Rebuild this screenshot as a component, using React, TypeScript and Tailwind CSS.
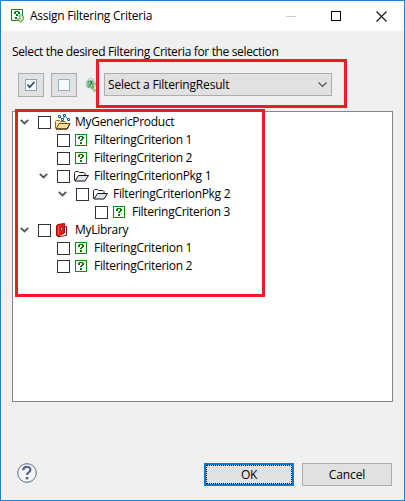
import React from "react";

function CriterionIcon() {
  return (
    <svg width="12" height="12" viewBox="0 0 12 12" shapeRendering="crispEdges" className="block">
      <rect x=".5" y=".5" width="11" height="11" fill="#fff" stroke="#128a12" />
      <path d="M4 2h4v1H4zM3 3h2v2H3zM7 3h2v2H7zM6 5h2v1H6zM5 6h2v1H5zM5 8h2v2H5z" fill="#087808" />
    </svg>
  );
}

function FilterIcon({ cloudy = false }: { cloudy?: boolean }) {
  return (
    <svg width="14" height="15" viewBox="0 0 14 15" className="block">
      {cloudy ? (
        <>
          <path d="M4 1Q7-1 9 2Q12 4 10 8Q8 11 5 10Q1 10 1 6Q0 3 4 1Z" fill="#e9f3f5" stroke="#a4c5c9" />
          <path d="M3 3h5v6H3z" fill="#b7d9bd" stroke="#49925a" />
          <path d="M4.5 4h2v2H5v2" fill="none" stroke="#176b26" />
        </>
      ) : (
        <>
          <path d="M.5.5h11v11H.5z" fill="#fff" stroke="#138013" />
          <path d="M4 2h4v1H4zM3 3h2v2H3zM7 3h2v2H7zM5 5h2v2H5zM4 8h2v2H4z" fill="#087808" />
        </>
      )}
      <path d="M8 6.5 9.5 5l1 1.5 2 .5v3.5l-1.5.5-.5 2-1.5.5-1-2-2-1 1.5-1 1 .5.5-2-1-.5z" fill="#b8d9a4" stroke="#70a964" strokeWidth=".9" />
      <path d="m9 8 2 1-1 2" fill="none" stroke="#e6f3cf" />
    </svg>
  );
}

function FolderIcon() {
  return (
    <svg width="15" height="11" viewBox="0 0 15 11" className="block">
      <path d="M.5 9.5v-8l1-1h3l1 1h4.5l1 1v2" fill="#fff" stroke="#222" />
      <path d="m1 10 3.5-5.5h10L11 10z" fill="#dce3f1" stroke="#111" />
    </svg>
  );
}

function ProductIcon() {
  return (
    <svg width="16" height="16" viewBox="0 0 16 16" className="block">
      <path d="M.5 14.5V7.5l1-1h3l1 1H10l1 1v1" fill="#fff0ba" stroke="#9b6710" />
      <path d="m1 15 3-5.5h11L12 15z" fill="#f9d999" stroke="#6d4810" />
      <path d="M1 15h11l3-5" fill="none" stroke="#39240a" />
      <g fill="#fff" stroke="#176399">
        <path d="M3.5 1.5h2v2h-2zM8.5.5h2v2h-2zM6.5 4.5h2v2h-2zM12.5 4.5h2v2h-2z" />
      </g>
      <path d="m5.5 3.5 1 1m2 0 1-2m1 0 2 2" stroke="#246b9b" />
    </svg>
  );
}

function LibraryIcon() {
  return (
    <svg width="12" height="15" viewBox="0 0 12 15" className="block">
      <path d="M8.5 3.5h2v9l-7.5 1" fill="#fff" stroke="#970808" />
      <path d="M.5 2.5 2 1.5 8.5.5V10L3 12.5v1.5L.5 12.5z" fill="#e51c1c" stroke="#a40707" />
      <path d="M2.5 3v9" stroke="#ff5a50" />
      <path d="m4.2 6 1-1.5 1.3.3v1.7L5 7.5z" fill="#fff" stroke="#850909" strokeWidth=".8" />
    </svg>
  );
}

function Chevron() {
  return (
    <svg width="9" height="6" viewBox="0 0 9 6" className="block">
      <path d="m.8.8 3.7 3.7L8.2.8" fill="none" stroke="#555" strokeWidth="1.8" />
    </svg>
  );
}

type Row = { label: string; level: number; kind: "product" | "criterion" | "folder" | "library" };

const rows: Row[] = [
  { label: "MyGenericProduct", level: 0, kind: "product" },
  { label: "FilteringCriterion 1", level: 1, kind: "criterion" },
  { label: "FilteringCriterion 2", level: 1, kind: "criterion" },
  { label: "FilteringCriterionPkg 1", level: 1, kind: "folder" },
  { label: "FilteringCriterionPkg 2", level: 2, kind: "folder" },
  { label: "FilteringCriterion 3", level: 3, kind: "criterion" },
  { label: "MyLibrary", level: 0, kind: "library" },
  { label: "FilteringCriterion 1", level: 1, kind: "criterion" },
  { label: "FilteringCriterion 2", level: 1, kind: "criterion" },
];

const indents = ["pl-[7px]", "pl-[26px]", "pl-[45px]", "pl-[64px]"];

function TreeRow({ row }: { row: Row }) {
  return (
    <div className={`flex h-[18px] items-center ${indents[row.level]}`}>
      <div className="w-[18px]">{row.kind !== "criterion" && <Chevron />}</div>
      <div className="size-[13px] border border-[#333] bg-white" />
      <div className={`flex w-6 shrink-0 ${row.kind === "criterion" || row.kind === "library" ? "pl-[5px]" : "pl-1"}`}>
        {row.kind === "criterion" && <CriterionIcon />}
        {row.kind === "folder" && <FolderIcon />}
        {row.kind === "product" && <ProductIcon />}
        {row.kind === "library" && <LibraryIcon />}
      </div>
      <span className="whitespace-nowrap tracking-[-0.3px]">{row.label}</span>
    </div>
  );
}

export default function App() {
  return (
    <main className="relative flex h-[501px] w-[405px] flex-col overflow-hidden border border-[#1a82d7] bg-[#f0f0f0] font-['Open_Sans','Noto_Sans',sans-serif] text-[12px] leading-[16px] text-black">
      <header className="flex h-[30px] shrink-0 items-center bg-white pl-[10px] pr-[17px]">
        <div className="mt-[1px] w-[19px]"><FilterIcon /></div>
        <h1 className="flex-1 whitespace-nowrap tracking-[-0.25px]">Assign Filtering Criteria</h1>
        <div className="flex items-center">
          <div className="mr-[35px] h-px w-[10px] bg-[#ccc]" />
          <div className="mr-[35px] size-[10px] border border-black" />
          <svg width="11" height="11" viewBox="0 0 11 11"><path d="m.5.5 10 10m0-10-10 10" stroke="#111" strokeWidth="1.1" /></svg>
        </div>
      </header>
      <p className="mt-[13px] h-4 whitespace-nowrap pl-[11px] tracking-[-0.35px]">Select the desired Filtering Criteria for the selection</p>
      <section className="mt-[13px] flex h-[25px] shrink-0 pl-[17px]">
        <button className="mr-[7px] flex h-6 w-[26px] items-center justify-center border border-[#adadad] bg-[#e1e1e1]">
          <span className="flex size-[12px] items-center justify-center border border-[#87a4bd] bg-[#f8fcff]">
            <svg width="10" height="10" viewBox="0 0 10 10" className="shrink-0"><path d="m1.5 4.5 2.2 2.7L8.5 2" fill="none" stroke="#344a68" strokeWidth="1.7" /></svg>
          </span>
        </button>
        <button className="flex h-6 w-[26px] items-center justify-center border border-[#adadad] bg-[#e1e1e1]">
          <span className="size-[12px] border border-[#8eb2cf] bg-[#f8fcff]" />
        </button>
        <div className="w-[27px] pl-2 pt-[5px]"><FilterIcon cloudy /></div>
        <button className="flex h-[23px] w-[228px] items-center justify-between border border-[#adadad] bg-[#e1e1e1] pl-[3px] pr-[4px]">
          <span className="tracking-[-0.18px]">Select a FilteringResult</span>
          <svg width="9" height="6" viewBox="0 0 9 6"><path d="m.5.5 4 4 4-4" fill="none" stroke="#555" strokeWidth="1.2" /></svg>
        </button>
      </section>
      <section className="ml-[11px] mt-[13px] h-[291px] w-[381px] shrink-0 border border-[#828790] bg-white pt-px">
        {rows.map((row, index) => <TreeRow key={index} row={row} />)}
      </section>
      <footer className="mt-[61px] flex h-[23px] shrink-0 items-start pl-4 pr-3">
        <svg width="20" height="20" viewBox="0 0 20 20">
          <circle cx="10" cy="10" r="9.3" fill="#f6f7fa" stroke="#58678a" />
          <path d="M6.2 7.2c0-4.4 7.2-4.5 7.2-.5 0 2.8-3.4 2.7-3.4 5.4" fill="none" stroke="#596789" strokeWidth="2.2" />
          <path d="M8.7 14h2.6v2.4H8.7z" fill="#596789" />
        </svg>
        <button className="ml-auto h-[23px] w-[90px] border-2 border-[#0078d7] bg-[#e1e1e1] tracking-[-0.3px]">
          <span className="flex h-full items-center justify-center border border-dotted border-black pt-px">OK</span>
        </button>
        <button className="ml-2 h-[23px] w-[90px] border border-[#adadad] bg-[#e1e1e1] pt-px tracking-[-0.1px]">Cancel</button>
      </footer>
      <div className="pointer-events-none absolute left-[95px] top-[58px] h-[49px] w-[251px] border-[3px] border-[#ed1c24]" />
      <div className="pointer-events-none absolute left-[14px] top-[108px] h-[188px] w-[250px] border-[3px] border-[#ed1c24]" />
    </main>
  );
}
